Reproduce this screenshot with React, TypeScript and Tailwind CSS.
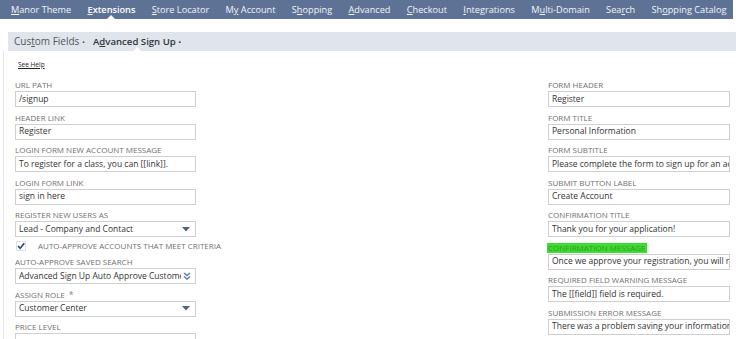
import React from "react";

type NavItem = { pre: string; key: string; post: string; active?: boolean };

const navItems: NavItem[] = [
  { pre: "", key: "M", post: "anor Theme" },
  { pre: "", key: "E", post: "xtensions", active: true },
  { pre: "", key: "S", post: "tore Locator" },
  { pre: "M", key: "y", post: " Account" },
  { pre: "S", key: "h", post: "opping" },
  { pre: "", key: "A", post: "dvanced" },
  { pre: "", key: "C", post: "heckout" },
  { pre: "", key: "I", post: "ntegrations" },
  { pre: "M", key: "u", post: "lti-Domain" },
  { pre: "Sea", key: "r", post: "ch" },
  { pre: "Sh", key: "o", post: "pping Catalog" },
];

const font = { fontFamily: '"Open Sans", "Liberation Sans", sans-serif' };

const Notch = () => (
  <span className="absolute left-1/2 -translate-x-1/2 bottom-0 w-0 h-0 border-l-[4px] border-r-[4px] border-b-[4px] border-l-transparent border-r-transparent border-b-white" />
);

const Label = ({ text, highlight }: { text: string; highlight?: boolean }) => (
  <div className="h-[12px] flex items-center">
    <span
      className={
        highlight
          ? "text-[8px] uppercase leading-[10px] px-[1px] -ml-[1px] bg-[#3ddc2e] text-[#2f9a26]"
          : "text-[8px] uppercase leading-[10px] text-[#707070]"
      }
    >
      {text}
    </span>
  </div>
);

const TextField = ({
  label,
  value,
  highlight,
}: {
  label: string;
  value: string;
  highlight?: boolean;
}) => (
  <div className="mb-[4.5px]">
    <Label text={label} highlight={highlight} />
    <div className="h-[16px] border border-[#cfcfcf] bg-white flex items-center px-[3px] overflow-hidden whitespace-nowrap">
      <span className="text-[8.5px] text-[#333]">{value}</span>
    </div>
  </div>
);

const SelectField = ({
  label,
  value,
  required,
  multi,
}: {
  label: string;
  value: string;
  required?: boolean;
  multi?: boolean;
}) => (
  <div className="mb-[4.5px]">
    <div className="h-[12px] flex items-center gap-[4px]">
      <span className="text-[8px] uppercase leading-[10px] text-[#707070]">{label}</span>
      {required && <span className="text-[9px] text-[#8a8a8a] leading-[10px]">*</span>}
    </div>
    <div className="h-[16px] border border-[#cfcfcf] bg-white flex items-center pl-[3px] pr-[4px] overflow-hidden whitespace-nowrap">
      <span className="text-[8.5px] text-[#333] flex-1 overflow-hidden">{value}</span>
      {multi ? (
        <svg width="8" height="8" viewBox="0 0 8 8" className="shrink-0 ml-[2px]">
          <path d="M1 1 L4 3.5 L7 1" fill="none" stroke="#5e78b0" strokeWidth="1.4" />
          <path d="M1 4.5 L4 7 L7 4.5" fill="none" stroke="#5e78b0" strokeWidth="1.4" />
        </svg>
      ) : (
        <svg width="8" height="5" viewBox="0 0 8 5" className="shrink-0 mr-[1px]">
          <path d="M0 0 H8 L4 4.5 Z" fill="#4b6289" />
        </svg>
      )}
    </div>
  </div>
);

export default function App() {
  return (
    <div className="w-[736px] h-[339px] bg-white overflow-hidden" style={font}>
      {/* top nav */}
      <div className="w-[733px] h-[19px] bg-[#5e7296] flex pl-[11px] gap-[16.3px] whitespace-nowrap">
        {navItems.map((n) => (
          <span
            key={n.pre + n.key + n.post}
            className={
              n.active
                ? "relative block h-[19px] leading-[19px] text-[9.2px] font-semibold text-white"
                : "relative block h-[19px] leading-[19px] text-[9.2px] text-[#f2f4f8]"
            }
          >
            {n.pre}
            <span className="underline">{n.key}</span>
            {n.post}
            {n.active && <Notch />}
          </span>
        ))}
      </div>

      {/* sub tabs */}
      <div className="mt-[13px] ml-[8px] h-[19px] bg-[#e0e5ed] flex pl-[6px] gap-[8px] whitespace-nowrap">
        <span className="block leading-[19px] text-[10px] text-[#555]">
          Cus<span className="underline">t</span>om Fields <span className="text-[8px]">•</span>
        </span>
        <span className="relative block h-[19px] leading-[19px] text-[9.6px] font-semibold text-[#333]">
          A<span className="underline">d</span>vanced Sign Up <span className="text-[8px] font-normal">•</span>
          <Notch />
        </span>
      </div>

      {/* body */}
      <div className="ml-[3px] border-l border-[#e6e6e6] pl-[11px] pr-[6px]">
        <div className="pt-[9px] pl-[3px] h-[28px]">
          <span className="text-[6.5px] text-[#222] underline leading-[10px] block">See Help</span>
        </div>

        <div className="flex justify-between">
          <div className="w-[181px]">
            <TextField label="URL Path" value="/signup" />
            <TextField label="Header Link" value="Register" />
            <TextField label="Login Form New Account Message" value="To register for a class, you can [[link]]." />
            <TextField label="Login Form Link" value="sign in here" />
            <SelectField label="Register New Users As" value="Lead - Company and Contact" />
            <div className="h-[11px] flex items-center gap-[12px] mb-[4.5px] -mt-[1px]">
              <svg width="10" height="10" viewBox="0 0 10 10" className="shrink-0 ml-[1px]">
                <rect x="0.5" y="0.5" width="9" height="9" fill="white" stroke="#e0e0e0" />
                <path d="M2 5 L4.2 7.3 L8.3 2.3" fill="none" stroke="#2b4674" strokeWidth="1.6" />
              </svg>
              <span className="text-[8px] uppercase text-[#707070] whitespace-nowrap">
                Auto-approve accounts that meet criteria
              </span>
            </div>
            <SelectField label="Auto-approve saved search" value="Advanced Sign Up Auto Approve Customers" multi />
            <SelectField label="Assign Role" value="Customer Center" required />
            <TextField label="Price Level" value="" />
          </div>

          <div className="w-[182px]">
            <TextField label="Form Header" value="Register" />
            <TextField label="Form Title" value="Personal Information" />
            <TextField label="Form Subtitle" value="Please complete the form to sign up for an account." />
            <TextField label="Submit Button Label" value="Create Account" />
            <TextField label="Confirmation Title" value="Thank you for your application!" />
            <TextField
              label="Confirmation Message"
              value="Once we approve your registration, you will receive an email."
              highlight
            />
            <TextField label="Required Field Warning Message" value="The [[field]] field is required." />
            <TextField label="Submission Error Message" value="There was a problem saving your information." />
          </div>
        </div>
      </div>
    </div>
  );
}
